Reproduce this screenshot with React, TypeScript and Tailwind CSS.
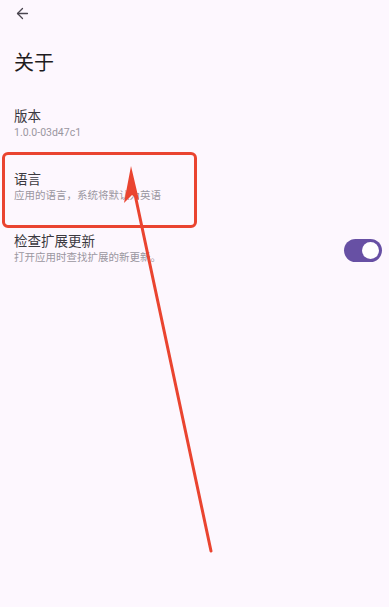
import { ArrowLeft } from "lucide-react";

const FONT = { fontFamily: '"Roboto", "Noto Sans CJK SC", sans-serif' };

function Row({ title, sub, toggle }: { title: string; sub: string; toggle?: boolean }) {
  return (
    <div className="flex items-center justify-between pl-[14px] pr-[7px]">
      <div className="flex flex-col">
        <div className="text-[13.5px] leading-[18px] text-[#3b3940]">{title}</div>
        <div className="text-[10.5px] leading-[15px] text-[#9a96a0]">{sub}</div>
      </div>
      {toggle && (
        <div className="w-[38px] h-[23px] mt-[4px] rounded-full bg-[#6750a4] flex items-center justify-end pr-[3px]">
          <div className="w-[17px] h-[17px] rounded-full bg-white" />
        </div>
      )}
    </div>
  );
}

export default function App() {
  return (
    <div className="relative w-[389px] h-[607px] bg-[#fdf7fe] overflow-hidden" style={FONT}>
      <div className="pl-[14px] pt-[5px] h-[42px] flex items-start">
        <ArrowLeft size={17} strokeWidth={1.8} className="text-[#49454f]" />
      </div>
      <div className="pl-[14px] mt-[7px] text-[20px] leading-[28px] text-[#1d1b20]">关于</div>
      <div className="flex flex-col mt-[30px] gap-[30px]">
        <Row title="版本" sub="1.0.0-03d47c1" />
        <Row title="语言" sub="应用的语言，系统将默认为英语" />
        <div className="-mt-[1px]">
          <Row title="检查扩展更新" sub="打开应用时查找扩展的新更新。" toggle />
        </div>
      </div>
      <div className="absolute left-[2px] top-[152px] w-[195px] h-[76px] border-[3px] border-[#ea4430] rounded-[6px]" />
      <svg className="absolute left-0 top-0" width="389" height="607">
        <line x1="211" y1="551" x2="133" y2="185" stroke="#ea4430" strokeWidth="3" strokeLinecap="round" />
        <polygon points="131,166 124,203 132,195 139,200" fill="#ea4430" />
      </svg>
    </div>
  );
}
